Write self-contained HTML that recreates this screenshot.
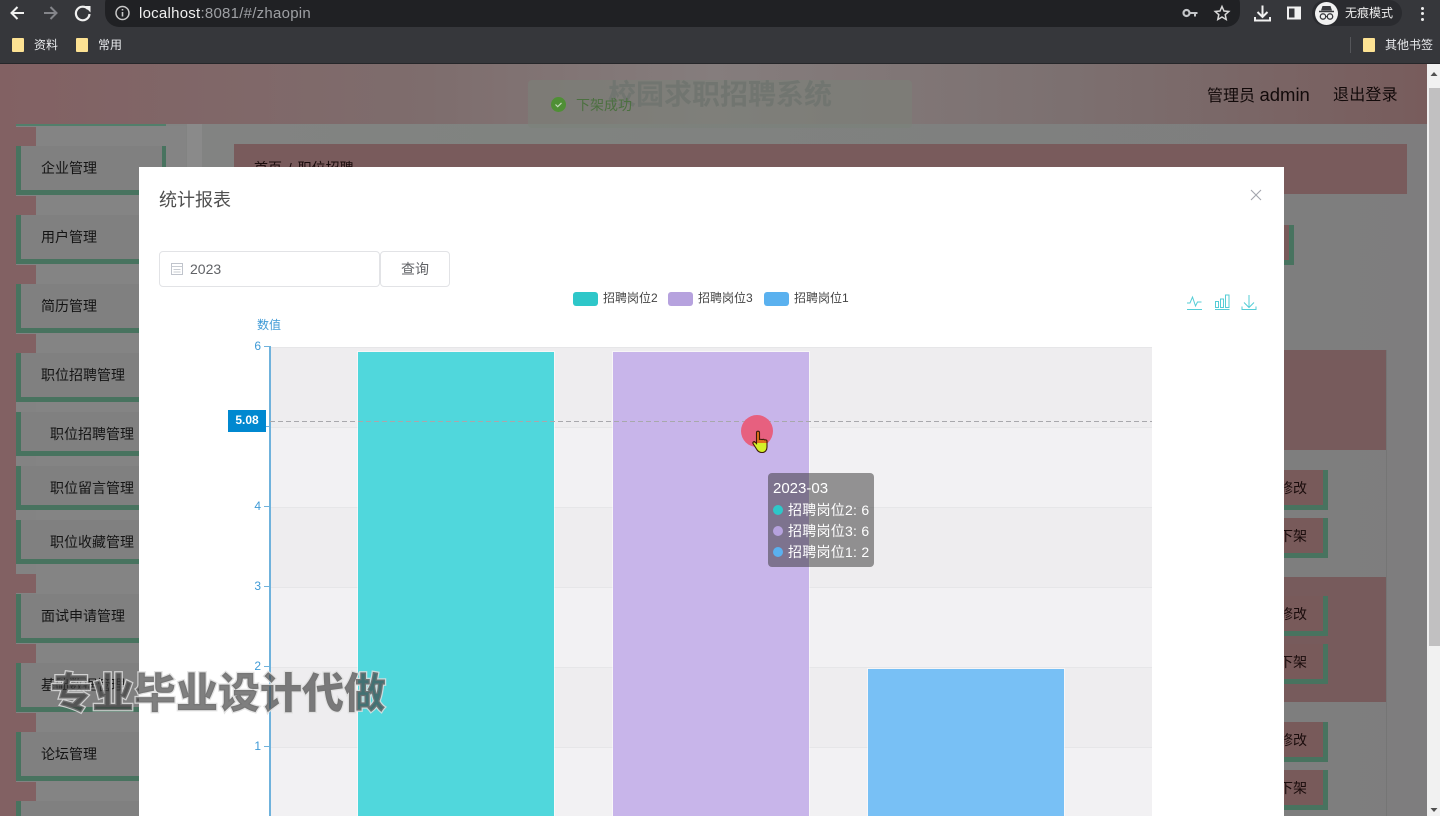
<!DOCTYPE html>
<html lang="zh">
<head>
<meta charset="utf-8">
<title>zhaopin</title>
<style>
html,body{margin:0;padding:0;width:1440px;height:816px;overflow:hidden;background:#808080}
body{position:relative;font-family:"Liberation Sans","Noto Sans CJK SC",sans-serif}
div,span{position:absolute;box-sizing:border-box}
.t{white-space:nowrap;line-height:1}
.tab{left:16px;width:20px;height:19px;background:#826163}
.it{left:16px;width:150px;border-left:5px solid #48735f;border-bottom:5px solid #48735f;border-right:4px solid #48735f;background:#808080}
.lab{color:#141414;font-size:14px}
.btn{left:1240px;width:88px;height:40px;background:#785a5a;border-right:5px solid #48735f;border-bottom:5px solid #48735f}
.bt{left:1279px;font-size:14px;color:#1a0c0c;width:28px;overflow:hidden;text-align:right}
.yl{left:240px;width:21px;text-align:right;color:#3f9ad6;font-size:12px}
.tk{left:264px;width:6px;height:1px;background:#6fb2dc}
.band{left:271px;width:881px;border-top:1px solid #e6e6e8}
</style>
</head>
<body>
<!-- browser chrome -->
<div style="left:0;top:0;width:1440px;height:64px;background:#36373b"></div>
<div style="left:0;top:63px;width:1440px;height:1px;background:#26272a"></div>
<div style="left:105px;top:-10px;width:1135px;height:37px;background:#202124;border-radius:14px"></div>
<svg style="position:absolute;left:0;top:0" width="130" height="28" viewBox="0 0 130 28" fill="none">
<path d="M24 13H12M17.500 7l-6 6 6 6" stroke="#f1f1f1" stroke-width="2"/>
<path d="M44 13h12M50.500 7l6 6-6 6" stroke="#84858a" stroke-width="2"/>
<path d="M88 9.200A6.800 6.800 0 1 0 89.500 14" stroke="#f1f1f1" stroke-width="2.200"/><path d="M84.500 6h6v6.500z" fill="#f1f1f1"/>
<circle cx="122.500" cy="13" r="6.500" stroke="#c8c8c8" stroke-width="1.500"/><path d="M122.500 12v4.500M122.500 9v1.500" stroke="#c8c8c8" stroke-width="1.600"/>
</svg>
<div class="t" style="left:139px;top:6px;font-size:15px;color:#f0f0f0;letter-spacing:.25px">localhost<span style="position:static;color:#9ea0a4">:8081/#/zhaopin</span></div>
<svg style="position:absolute;left:1175px;top:0" width="265" height="28" viewBox="0 0 265 28" fill="none">
<circle cx="11.500" cy="13" r="3" stroke="#c4c6c9" stroke-width="2.200"/><path d="M14 12h8.500v2H21v2.500h-2V14h-5z" fill="#c4c6c9"/>
<path d="M47 6.500l2 4.500 4.800.5-3.600 3.200 1 4.800-4.200-2.500-4.200 2.500 1-4.800-3.600-3.200 4.800-.5z" stroke="#d8d8d8" stroke-width="1.500"/>
<path d="M87.500 5.500v11M82.500 12l5 5 5-5" stroke="#f1f1f1" stroke-width="2"/><path d="M80 17v3.500h15V17" stroke="#f1f1f1" stroke-width="2"/>
<path d="M113 7.500h12v11h-12z" stroke="#f1f1f1" stroke-width="2"/><path d="M119.500 7h6.500v12h-6.500z" fill="#f1f1f1"/>
</svg>
<div style="left:1312px;top:0;width:90px;height:26px;background:#2a2b2f;border-radius:13px"></div>
<div style="left:1315px;top:2px;width:23px;height:23px;border-radius:50%;background:#f1f1f1"></div>
<svg style="position:absolute;left:1315px;top:2px" width="23" height="23" viewBox="0 0 23 23" fill="none">
<path d="M7.500 4h8l1.500 4.500H6z" fill="#3a3b3f"/><path d="M4 9.500h15" stroke="#3a3b3f" stroke-width="1.500"/>
<circle cx="8" cy="14.500" r="2.700" stroke="#3a3b3f" stroke-width="1.300"/><circle cx="15" cy="14.500" r="2.700" stroke="#3a3b3f" stroke-width="1.300"/><path d="M10.500 14.500h2" stroke="#3a3b3f"/>
</svg>
<div class="t" style="left:1345px;top:7px;font-size:12px;color:#eee">无痕模式</div>
<div style="left:1421px;top:7px;width:3px;height:3px;background:#eee;border-radius:50%"></div>
<div style="left:1421px;top:12px;width:3px;height:3px;background:#eee;border-radius:50%"></div>
<div style="left:1421px;top:18px;width:3px;height:3px;background:#eee;border-radius:50%"></div>
<!-- bookmarks -->
<div style="left:12px;top:38px;width:12px;height:14px;background:#fde293;border-radius:1px"></div>
<div class="t" style="left:34px;top:39px;font-size:12px;color:#e8eaed">资料</div>
<div style="left:76px;top:38px;width:12px;height:14px;background:#fde293;border-radius:1px"></div>
<div class="t" style="left:98px;top:39px;font-size:12px;color:#e8eaed">常用</div>
<div style="left:1350px;top:37px;width:1px;height:16px;background:#55565a"></div>
<div style="left:1363px;top:38px;width:12px;height:14px;background:#fde293;border-radius:1px"></div>
<div class="t" style="left:1385px;top:39px;font-size:12px;color:#e8eaed">其他书签</div>

<!-- page behind overlay -->
<div style="left:0;top:64px;width:1428px;height:60px;background:linear-gradient(90deg,#826163 0%,#7e6d6d 30%,#857d7d 50%,#7c7070 75%,#785c5c 100%)"></div>
<div style="left:0;top:124px;width:1428px;height:692px;background:linear-gradient(90deg,#838383,#808380 40%,#7e7d7e)"></div>
<div style="left:0;top:124px;width:16px;height:692px;background:#826163"></div>
<div style="left:36px;top:126px;width:150px;height:690px;background:#848484"></div>
<div style="left:16px;top:124px;width:150px;height:2px;background:#527f6b"></div>
<div style="left:187px;top:124px;width:15px;height:692px;background:#8a8a8a"></div>
<div class="t" style="left:608px;top:81px;font-size:28px;font-weight:700;color:#676767;letter-spacing:0">校园求职招聘系统</div>
<div style="left:528px;top:80px;width:384px;height:48px;background:rgba(122,130,120,.55);border-radius:4px"></div>
<div style="left:551px;top:97px;width:15px;height:15px;border-radius:50%;background:#4f8f35"></div>
<svg style="position:absolute;left:551px;top:97px" width="15" height="15" fill="none"><path d="M4.500 7.500l2.200 2.200 3.800-3.800" stroke="#c4d8bc" stroke-width="1.200"/></svg>
<div class="t" style="left:576px;top:98px;font-size:14px;color:#4c7040">下架成功</div>
<div class="t" style="left:1207px;top:86px;font-size:16px;color:#120a0a">管理员 <span style="position:static;font-size:18.500px">admin</span></div>
<div class="t" style="left:1333px;top:88px;font-size:16px;letter-spacing:.2px;color:#120a0a">退出登录</div>

<div class="tab" style="top:127px"></div><div class="it" style="top:146px;height:49px"></div><div class="t lab" style="left:41px;top:161px">企业管理</div>
<div class="tab" style="top:196px"></div><div class="it" style="top:215px;height:49px"></div><div class="t lab" style="left:41px;top:230px">用户管理</div>
<div class="tab" style="top:265px"></div><div class="it" style="top:284px;height:49px"></div><div class="t lab" style="left:41px;top:299px">简历管理</div>
<div class="tab" style="top:334px"></div><div class="it" style="top:353px;height:49px"></div><div class="t lab" style="left:41px;top:368px">职位招聘管理</div>
<div class="it" style="top:412px;height:44px"></div><div class="t lab" style="left:50px;top:427px">职位招聘管理</div>
<div class="it" style="top:466px;height:44px"></div><div class="t lab" style="left:50px;top:481px">职位留言管理</div>
<div class="it" style="top:520px;height:44px"></div><div class="t lab" style="left:50px;top:535px">职位收藏管理</div>
<div class="tab" style="top:574px"></div><div class="it" style="top:594px;height:49px"></div><div class="t lab" style="left:41px;top:609px">面试申请管理</div>
<div class="tab" style="top:644px"></div><div class="it" style="top:663px;height:49px"></div><div class="t lab" style="left:41px;top:678px">基础数据管理</div>
<div class="tab" style="top:713px"></div><div class="it" style="top:732px;height:49px"></div><div class="t lab" style="left:41px;top:747px">论坛管理</div>
<div class="tab" style="top:782px"></div><div class="it" style="top:801px;height:49px"></div>

<div style="left:234px;top:144px;width:1173px;height:50px;background:#795b5c"></div>
<div class="t" style="left:254px;top:161px;font-size:14px;color:#1a0c0c;word-spacing:2px">首页 / 职位招聘</div>
<div style="left:1200px;top:225px;width:94px;height:40px;background:#785a5a;border-right:5px solid #48735f;border-bottom:5px solid #48735f"></div>
<div style="left:1200px;top:350px;width:186px;height:100px;background:#775b5c"></div>
<div style="left:1200px;top:577px;width:186px;height:125px;background:#775b5c"></div>
<div style="left:1386px;top:350px;width:1px;height:466px;background:#757575"></div>
<div class="btn" style="top:470px"></div><div class="t bt" style="top:481px">修改</div>
<div class="btn" style="top:518px"></div><div class="t bt" style="top:529px">下架</div>
<div class="btn" style="top:596px"></div><div class="t bt" style="top:607px">修改</div>
<div class="btn" style="top:644px"></div><div class="t bt" style="top:655px">下架</div>
<div class="btn" style="top:722px"></div><div class="t bt" style="top:733px">修改</div>
<div class="btn" style="top:770px"></div><div class="t bt" style="top:781px">下架</div>

<!-- scrollbar -->
<div style="left:1427px;top:64px;width:13px;height:752px;background:#f1f1f1"></div>
<div style="left:1429px;top:88px;width:11px;height:558px;background:#c1c0c1"></div>
<svg style="position:absolute;left:1428px;top:68px" width="12" height="12"><path d="M2.500 8L6 4l3.500 4z" fill="#505050"/></svg>
<svg style="position:absolute;left:1428px;top:804px" width="12" height="12"><path d="M2.500 4L6 8l3.500-4z" fill="#505050"/></svg>

<!-- modal -->
<div style="left:139px;top:167px;width:1145px;height:649px;background:#fff"></div>
<div class="t" style="left:159px;top:191px;font-size:18px;color:#4f4f4f">统计报表</div>
<svg style="position:absolute;left:1250px;top:189px" width="12" height="12" fill="none"><path d="M1 1l10 10M11 1L1 11" stroke="#a3a6ad" stroke-width="1.100"/></svg>
<div style="left:159px;top:251px;width:221px;height:36px;border:1px solid #e2e3e6;border-radius:4px"></div>
<svg style="position:absolute;left:170px;top:262px" width="14" height="14" fill="none"><path d="M1.500 1.500h11v11h-11z" stroke="#c0c4cc"/><path d="M1.500 4.500h11M3.500 7.500h7M3.500 10h7" stroke="#c8ccd2"/></svg>
<div class="t" style="left:190px;top:262px;font-size:14px;color:#606266">2023</div>
<div style="left:380px;top:251px;width:70px;height:36px;border:1px solid #e2e3e6;border-radius:4px"></div>
<div class="t" style="left:401px;top:262px;font-size:14px;color:#606266">查询</div>

<!-- legend -->
<div style="left:573px;top:292px;width:25px;height:14px;background:#2ec7c9;border-radius:3px"></div>
<div class="t" style="left:603px;top:292px;font-size:12px;color:#444">招聘岗位2</div>
<div style="left:668px;top:292px;width:25px;height:14px;background:#b6a2de;border-radius:3px"></div>
<div class="t" style="left:698px;top:292px;font-size:12px;color:#444">招聘岗位3</div>
<div style="left:764px;top:292px;width:25px;height:14px;background:#5ab1ef;border-radius:3px"></div>
<div class="t" style="left:794px;top:292px;font-size:12px;color:#444">招聘岗位1</div>
<!-- toolbox -->
<svg style="position:absolute;left:1186px;top:293px" width="72" height="19" viewBox="0 0 72 19" fill="none" stroke="#55cdd6" stroke-width="1">
<path d="M1 16.500h15M1 10h3l2.500-6 3 9 2-4h4"/>
<path d="M29 16.500h14.500M29.500 8.500h3v6h-3zM34.500 6h3v8.500h-3zM39.500 2h3.500v12.500h-3.500z"/>
<path d="M63 2v12M58 9.500l5 5 5-5M56 13.500v3h14v-3"/>
</svg>

<!-- chart -->
<div class="t" style="left:257px;top:319px;font-size:12px;color:#3f9ad6">数值</div>
<div class="band" style="top:347px;height:80px;background:#eeedef"></div>
<div class="band" style="top:427px;height:80px;background:#f2f1f3"></div>
<div class="band" style="top:507px;height:80px;background:#eeedef"></div>
<div class="band" style="top:587px;height:80px;background:#f2f1f3"></div>
<div class="band" style="top:667px;height:80px;background:#eeedef"></div>
<div class="band" style="top:747px;height:69px;background:#f2f1f3"></div>
<div style="left:358px;top:352px;width:196px;height:464px;background:#50d7dc;box-shadow:0 0 0 1px rgba(255,255,255,.5)"></div>
<div style="left:613px;top:352px;width:196px;height:464px;background:#c8b5ea;box-shadow:0 0 0 1px rgba(255,255,255,.5)"></div>
<div style="left:868px;top:669px;width:196px;height:147px;background:#78c0f5;box-shadow:0 0 0 1px rgba(255,255,255,.5)"></div>
<div style="left:269px;top:346px;width:2px;height:470px;background:#6fb2dc"></div>
<div class="tk" style="top:346px"></div><div class="tk" style="top:426px"></div><div class="tk" style="top:506px"></div><div class="tk" style="top:586px"></div><div class="tk" style="top:666px"></div><div class="tk" style="top:746px"></div>
<div class="t yl" style="top:340px">6</div>
<div class="t yl" style="top:500px">4</div>
<div class="t yl" style="top:580px">3</div>
<div class="t yl" style="top:660px">2</div>
<div class="t yl" style="top:740px">1</div>
<svg style="position:absolute;left:270px;top:420px" width="882" height="2"><path d="M0 1.500H882" stroke="#a8a8ac" stroke-dasharray="5 3"/></svg>
<div class="t" style="left:228px;top:410px;width:38px;height:22px;background:#0088d0;color:#fff;font-size:12px;font-weight:700;text-align:center;line-height:20px">5.08</div>

<!-- pointer -->
<div style="left:741px;top:415px;width:32px;height:32px;border-radius:50%;background:#e7607f"></div>
<svg style="position:absolute;left:750px;top:428px" width="22" height="28" viewBox="0 0 22 28">
<defs><linearGradient id="h" x1="0" y1="0" x2="0" y2="1"><stop offset=".55" stop-color="#e2701c"/><stop offset=".55" stop-color="#d4f028"/></linearGradient></defs>
<path d="M6.500 4.500c0-1.800 3-1.800 3 0V12c0-1 2.500-1 2.500 0 .3-1 2.500-1 2.500.3.400-.8 2.500-.6 2.500 1V19c0 3-1.700 5.500-5 5.500-3 0-4.500-1.500-5.500-3.500L3 15.500c-.6-1.500 1-2.500 2-1.500l1.500 1.500z" fill="url(#h)" stroke="#3d1c08" stroke-width="1.100"/>
</svg>

<!-- tooltip -->
<div style="left:768px;top:473px;width:106px;height:94px;background:rgba(50,50,50,.5);border-radius:4px"></div>
<div class="t" style="left:773px;top:481px;font-size:15px;color:#fff">2023-03</div>
<div style="left:773px;top:505px;width:10px;height:10px;border-radius:50%;background:#2ec7c9"></div>
<div class="t" style="left:788px;top:503px;font-size:14px;letter-spacing:.25px;color:#fff">招聘岗位2: 6</div>
<div style="left:773px;top:526px;width:10px;height:10px;border-radius:50%;background:#b6a2de"></div>
<div class="t" style="left:788px;top:524px;font-size:14px;letter-spacing:.25px;color:#fff">招聘岗位3: 6</div>
<div style="left:773px;top:547px;width:10px;height:10px;border-radius:50%;background:#5ab1ef"></div>
<div class="t" style="left:788px;top:545px;font-size:14px;letter-spacing:.25px;color:#fff">招聘岗位1: 2</div>

<!-- watermark -->
<div class="t" style="left:50px;top:670px;font-size:42px;font-weight:900;color:rgba(60,60,60,.66);-webkit-text-stroke:2.500px rgba(222,222,222,.85);paint-order:stroke fill;font-family:'Noto Sans CJK SC',sans-serif">专业毕业设计代做</div>
</body>
</html>
